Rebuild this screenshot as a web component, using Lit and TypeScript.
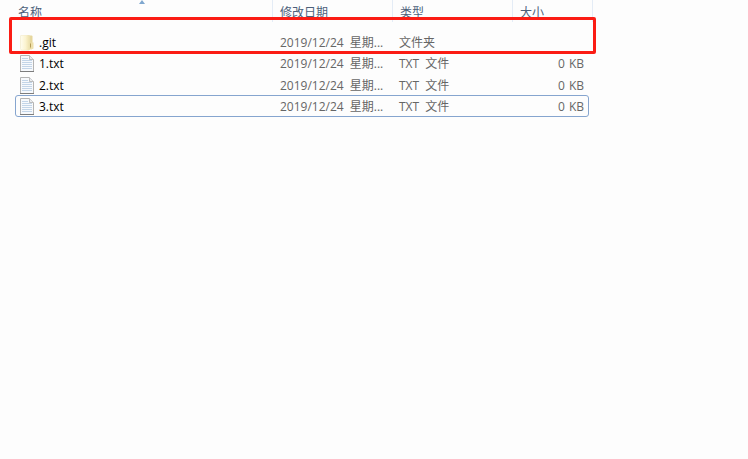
import { LitElement, html, css, svg } from "lit";
import { customElement } from "lit/decorators.js";

const folderIcon = svg`<svg class="icon" width="14" height="16" viewBox="0 0 14 16">
  <defs><linearGradient id="fg" x1="0" x2="1" y1="0" y2="0"><stop offset="0" stop-color="#fffdf0"/><stop offset=".55" stop-color="#fbf3cf"/><stop offset="1" stop-color="#ecdfa8"/></linearGradient></defs>
  <path d="M7 .5H11.5Q12.5 .5 12.5 1.5V14L7 15z" fill="#e6d69c"/>
  <path d="M11 7.5H13.5V13.5L11 14.5z" fill="#eee0ac"/>
  <path d="M0.5 1Q0.5 .3 1.5 .3H8.5Q9.8 .3 9.8 1.5V13.5Q9.8 15 8.5 15.2H2Q.5 15.2 .5 13.5z" fill="url(#fg)" stroke="#efe5bd" stroke-width=".5"/>
  <path d="M10.5 8.5V12.5" stroke="#b59c58" stroke-width="1"/>
</svg>`;

const fileIcon = svg`<svg class="icon" width="14" height="17" viewBox="0 0 14 17">
  <path d="M.5.5H9.5L13.5 4.5V16.5H.5z" fill="#f7f9fc" stroke="#b4b4b4"/>
  <path d="M9.5 .5V4.5H13.5" fill="#e9ecf0" stroke="#bdbdbd"/>
  <path d="M2 3.5H8M2 5.5H12M2 7.5H12M2 9.5H12M2 11.5H12M2 13.5H12" stroke="#c3d5e8" stroke-width="1"/>
  <path d="M0 16.5H14" stroke="#7d7d7d"/>
</svg>`;

const rows = [
  { name: ".git", type: "文件夹", size: "", folder: true, selected: false, raised: true },
  { name: "1.txt", type: "TXT 文件", size: "0 KB", folder: false, selected: false, raised: true },
  { name: "2.txt", type: "TXT 文件", size: "0 KB", folder: false, selected: false, raised: false },
  { name: "3.txt", type: "TXT 文件", size: "0 KB", folder: false, selected: true, raised: false },
];

@customElement("app-root")
export class AppRoot extends LitElement {
  static styles = css`
    :host {
      display: block;
      position: relative;
      width: 748px;
      height: 459px;
      overflow: hidden;
      background: #fdfdfd;
      font-family: "Open Sans", "Noto Sans CJK SC", sans-serif;
      font-size: 12px;
      color: #000;
    }
    .header {
      display: grid;
      grid-template-columns: 273px 120px 120px 80px;
      width: 593px;
      height: 32px;
    }
    .hcell {
      position: relative;
      height: 22px;
      padding: 6px 0 0 7px;
      box-sizing: border-box;
      border-right: 1px solid #e4ecf6;
      color: #4c607a;
      font-size: 12px;
      line-height: 14px;
      white-space: nowrap;
    }
    .hcell:first-child { padding-left: 18px; }
    .arrow {
      position: absolute;
      left: 139px;
      top: 0;
      width: 0;
      height: 0;
      border-left: 3.5px solid transparent;
      border-right: 3.5px solid transparent;
      border-bottom: 4px solid #7fa7cf;
    }
    .list {
      display: flex;
      flex-direction: column;
      width: 574px;
      margin-left: 15px;
    }
    .row {
      display: grid;
      grid-template-columns: 257px 120px 1fr 74px;
      align-items: center;
      height: 21px;
      box-sizing: border-box;
      border: 1px solid transparent;
      border-radius: 3px;
      line-height: 19px;
      white-space: nowrap;
      padding-top: 1px;
    }
    .row.raised { padding-top: 0; padding-bottom: 1px; }
    .row.selected { border-color: #86a5cf; height: 22px; padding-top: 0; }
    .name { display: flex; align-items: center; padding-left: 4px; color: #000; }
    .icon { flex: none; display: block; }
    .namecell { display: flex; align-items: center; width: 19px; }
    .date, .type { color: #666; word-spacing: 3px; }
    .date { padding-left: 7px; }
    .type { padding-left: 6px; }
    .size { color: #666; text-align: right; padding-right: 4px; word-spacing: 1px; }
    .mark {
      position: absolute;
      left: 9px;
      top: 17px;
      width: 587px;
      height: 37px;
      box-sizing: border-box;
      border: 3px solid #fb1c14;
      border-radius: 2px;
      pointer-events: none;
    }
  `;

  render() {
    return html`
      <div class="header">
        <div class="hcell">名称<span class="arrow"></span></div>
        <div class="hcell">修改日期</div>
        <div class="hcell">类型</div>
        <div class="hcell">大小</div>
      </div>
      <div class="list">
        ${rows.map(
          (r) => html`
            <div class="row ${r.selected ? "selected" : ""} ${r.raised ? "raised" : ""}">
              <div class="name">
                <span class="namecell">${r.folder ? folderIcon : fileIcon}</span>${r.name}
              </div>
              <div class="date">2019/12/24 星期...</div>
              <div class="type">${r.type}</div>
              <div class="size">${r.size}</div>
            </div>
          `
        )}
      </div>
      <div class="mark"></div>
    `;
  }
}
